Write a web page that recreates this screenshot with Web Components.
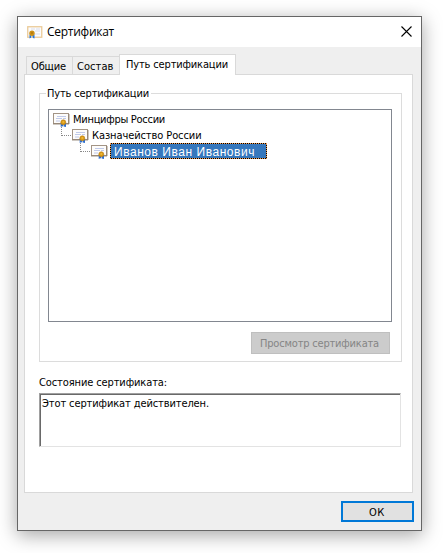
<!DOCTYPE html>
<html lang="ru">
<head>
<meta charset="utf-8">
<title>Сертификат</title>
<style>
html,body{margin:0;background:#fff}
body{width:443px;height:553px;overflow:hidden;padding:16px 0 0 17px;box-sizing:border-box;font:11px/16px "DejaVu Sans Condensed","DejaVu Sans",sans-serif;color:#000}
</style>
</head>
<body>
<cert-window></cert-window>
<script>
const define = (name, html, extra) => {
  const template = document.createElement('template');
  template.innerHTML = html;
  customElements.define(name, class extends HTMLElement {
    constructor() {
      super();
      this.attachShadow({ mode: 'open' }).append(template.content.cloneNode(true));
    }
    connectedCallback() { if (extra) extra(this); }
  });
};

/* One line of text whose tracking is adjusted to occupy the requested width. */
define('fit-text', `<style>:host{display:block;white-space:nowrap}span{display:inline-block;white-space:pre}</style><span><slot></slot></span>`, el => {
  const span = el.shadowRoot.querySelector('span');
  const n = el.textContent.length;
  const target = Number(el.getAttribute('w'));
  span.style.letterSpacing = '0px';
  const natural = span.getBoundingClientRect().width;
  span.style.letterSpacing = (target - natural) / n + 'px';
});

define('cert-icon', `<style>:host{display:block;width:18px;height:16px;flex:none}svg{display:block}</style>
<svg width="18" height="16" viewBox="0 0 18 16">
<rect x="1.500" y="2.500" width="15" height="10" fill="#fdfcfb" stroke="#a39485"/>
<path d="M1 13h16V3" fill="none" stroke="#877666" stroke-width=".8"/>
<path d="M5 5.500h9M4 7.500h6M11 7.500h3M4 10h4" stroke="#b9c4e6" stroke-width=".9"/>
<path d="M8.700 12v4l1.500-.8 1 .3V12zM11.800 12v3.500l1 .3 1.200.2v-4z" fill="#2f6fd0"/>
<circle cx="11.300" cy="11.300" r="2.500" fill="#d99a16" stroke="#b57b16" stroke-width=".6"/>
<circle cx="11.300" cy="11.100" r="1" fill="#f0b93a"/>
</svg>`);

define('title-icon', `<style>:host{display:block;width:16px;height:13px;flex:none}svg{display:block}</style>
<svg width="16" height="13" viewBox="0 0 16 13">
<rect x=".75" y=".75" width="14" height="10.500" fill="#fcfcfe" stroke="#ebcb98" stroke-width="1.300"/>
<path d="M4 3h4M9 3h4M8 5h5M8 8h5" stroke="#e5e8f1" stroke-width="1.500"/>
<path d="M2.500 8.500v4l1.500-.8.500-2zM5 9l1 3 1.500.5v-4z" fill="#2877dc"/>
<circle cx="5" cy="7.300" r="2.700" fill="#cc9015"/><circle cx="5" cy="7" r="1" fill="#b5780b"/>
</svg>`);

define('title-bar', `<style>
:host{display:flex;height:30px;background:#fff;padding-left:9px;align-items:flex-start;font:12px/16px "Open Sans","Noto Sans",sans-serif}
title-icon{margin-top:9px}
.title{margin:7px 0 0 4px}
.x{margin:9px 9px 0 auto}
</style><title-icon></title-icon><div class="title"><slot></slot></div>
<svg class="x" width="11" height="11" viewBox="0 0 11 11"><path d="M.5.5l10 10M10.500.5l-10 10" stroke="#000" stroke-width="1.100"/></svg>`);

define('tab-item', `<style>
:host{display:block;box-sizing:border-box;height:18px;border:1px solid #d9d9d9;border-width:1px 0 0 1px;padding:2px 0 0 4px;background:#efefef}
:host([active]){height:21px;border-width:1px 1px 0;background:#fff;padding:2px 0 0 6px;margin-bottom:-1px;z-index:1}
</style><slot></slot>`);

define('group-box', `<style>
:host{display:block;box-sizing:border-box;border:1px solid #dcdcdc;height:269px;padding:0 9px 0 8px}
.legend{margin:-8px 0 0 -2px;width:105px;background:#fff;padding-left:1px;height:16px;box-sizing:border-box}
</style><div class="legend"><slot name="legend"></slot></div><slot></slot>`);

define('tree-row', `<style>
:host{display:flex;height:16px;align-items:flex-start}
:host([level="1"]){padding-left:19px}
:host([level="2"]){padding-left:38px}
.link{display:none;width:10px;height:9px;margin:0 0 0 -10px;flex:none;border:1px dotted #888;border-width:0 0 1px 1px;box-sizing:border-box}
:host([level]) .link{display:block}
.label{margin-left:1px;padding:1px 0 0 2px;height:16px;box-sizing:border-box}
:host([selected]) .label{width:157px;height:16px;background:#3577bd;box-shadow:inset 0 0 0 1px #000;outline:1px dotted #f09a50;outline-offset:-1px;color:#fff;padding:0 0 0 4px;margin-left:2px;font:12px/18px "Liberation Sans",Arial,sans-serif}
</style><div class="link"></div><cert-icon></cert-icon><div class="label"><slot></slot></div>`);

define('push-button', `<style>
:host{display:flex;box-sizing:border-box;align-items:flex-start}
:host([disabled]){width:139px;height:22px;background:#ccc;border:1px solid #bfbfbf;color:#858585;padding:3px 0 0 8px}
:host([default]){width:73px;height:21px;background:#e1e1e1;border:2px solid #0078d7;padding:2px 0 0 26px}
</style><slot></slot>`);

define('status-box', `<style>
:host{display:block;box-sizing:border-box;width:362px;height:54px;border:1px solid #e3e3e3;border-top-color:#a0a0a0;border-left-color:#a0a0a0}
div{height:100%;box-sizing:border-box;border:solid #696969;border-width:1px 0 0 1px;padding:1px 0 0 1px}
</style><div><slot></slot></div>`);

define('cert-window', `<style>
:host{display:flex;flex-direction:column;box-sizing:border-box;width:405px;height:515px;background:#efefef;border:1px solid #666;box-shadow:0 4px 18px rgba(0,0,0,.36)}
.tabs{display:flex;align-items:flex-end;height:20px;margin:7px 0 0 8px}
.a{width:46px}.b{width:47px}.c{width:117px}
.panel{box-sizing:border-box;width:389px;height:419px;margin-left:6px;border:1px solid #d9d9d9;background:#fff;padding:18px 10px 0 14px}
.tree{box-sizing:border-box;height:213px;width:344px;border:1px solid #828790;padding:1px 0 0 3px;margin-top:7px}
.view{margin:10px 0 0 203px}
.state{margin:13px 0 2px 0}
.ok{margin:8px 0 0 323px}
</style>
<title-bar><fit-text w="67">Сертификат</fit-text></title-bar>
<div class="tabs"><tab-item class="a"><fit-text w="35">Общие</fit-text></tab-item><tab-item class="b"><fit-text w="36.500">Состав</fit-text></tab-item><tab-item class="c" active><fit-text w="102">Путь сертификации</fit-text></tab-item></div>
<div class="panel">
<group-box><fit-text slot="legend" w="102">Путь сертификации</fit-text>
<div class="tree">
<tree-row><fit-text w="92">Минцифры России</fit-text></tree-row>
<tree-row level="1"><fit-text w="109.500">Казначейство России</fit-text></tree-row>
<tree-row level="2" selected><fit-text w="141">Иванов Иван Иванович</fit-text></tree-row>
</div>
<push-button class="view" disabled><fit-text w="119">Просмотр сертификата</fit-text></push-button>
</group-box>
<fit-text class="state" w="128">Состояние сертификата:</fit-text>
<status-box><fit-text w="167">Этот сертификат действителен.</fit-text></status-box>
</div>
<push-button class="ok" default><fit-text w="16">ОК</fit-text></push-button>`);
</script>
</body>
</html>
